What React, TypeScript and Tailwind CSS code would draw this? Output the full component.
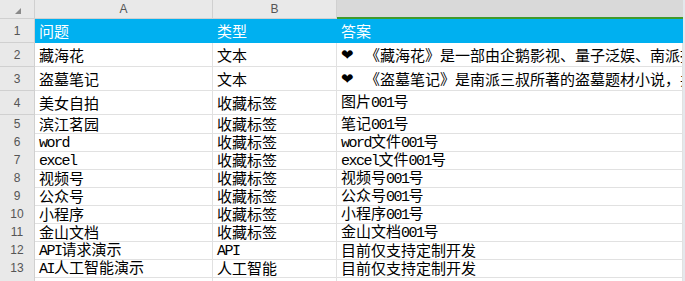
const cols = 'grid grid-cols-[35px_178px_124px_346px_2px]'
const cjk = "font-['Noto_Sans_CJK_SC',sans-serif]"

interface Row {
  q: string
  t: string
  a: string
  heart?: boolean
  tall?: boolean
}

const rows: Row[] = [
  { q: '藏海花', t: '文本', a: '《藏海花》是一部由企鹅影视、量子泛娱、南派投资联合出品的网络剧', heart: true, tall: true },
  { q: '盗墓笔记', t: '文本', a: '《盗墓笔记》是南派三叔所著的盗墓题材小说，共九部', heart: true, tall: true },
  { q: '美女自拍', t: '收藏标签', a: '图片001号', tall: true },
  { q: '滨江茗园', t: '收藏标签', a: '笔记001号' },
  { q: 'word', t: '收藏标签', a: 'word文件001号' },
  { q: 'excel', t: '收藏标签', a: 'excel文件001号' },
  { q: '视频号', t: '收藏标签', a: '视频号001号' },
  { q: '公众号', t: '收藏标签', a: '公众号001号' },
  { q: '小程序', t: '收藏标签', a: '小程序001号' },
  { q: '金山文档', t: '收藏标签', a: '金山文档001号' },
  { q: 'API请求演示', t: 'API', a: '目前仅支持定制开发' },
  { q: 'AI人工智能演示', t: '人工智能', a: '目前仅支持定制开发' },
]

// latin runs get a narrow mono face so they sit at half the width of a CJK glyph
function Mixed({ text }: { text: string }) {
  const parts = text.split(/([\x21-\x7e]+)/).filter(Boolean)
  return (
    <span className="leading-[18px]">
      {parts.map((p, i) =>
        /^[\x21-\x7e]+$/.test(p) ? (
          <span key={i} className="font-['Liberation_Mono',monospace] text-[15px] tracking-[-1.5px]">
            {p}
          </span>
        ) : (
          <span key={i}>{p}</span>
        ),
      )}
    </span>
  )
}

function RowNum({ n }: { n: number | string }) {
  return (
    <div className="flex items-center justify-center border-r border-b border-[#d0d0d0] bg-[#e9e9e9] font-['Liberation_Sans',sans-serif] text-[12px] text-[#555]">
      {n}
    </div>
  )
}

function Cell({ children }: { children?: React.ReactNode }) {
  return (
    <div className="flex items-center overflow-hidden whitespace-nowrap border-r border-b border-[#e1e1e1] pl-[4px] text-[15px] text-black">
      {children}
    </div>
  )
}

export default function App() {
  return (
    <div className={`h-[281px] w-[685px] overflow-hidden bg-white ${cjk}`}>
      <div className={`${cols} h-[19px]`}>
        <div className="relative border-r border-b border-[#d0d0d0] bg-[#e9e9e9]">
          <svg className="absolute top-[8px] left-[15px]" width="6" height="6" viewBox="0 0 6 6">
            <path d="M6 0 V6 H0 Z" fill="#8a8a8a" />
          </svg>
        </div>
        <div className="flex items-center justify-center border-r border-b border-[#d0d0d0] bg-[#e9e9e9] font-['Liberation_Sans',sans-serif] text-[12px] text-[#555]">
          A
        </div>
        <div className="flex items-center justify-center border-r border-b border-[#d0d0d0] bg-[#e9e9e9] font-['Liberation_Sans',sans-serif] text-[12px] text-[#555]">
          B
        </div>
        <div className="border-b-2 border-[#3f9a2c] bg-[#d9d9d9]" />
        <div className="bg-[#e4e8ec]" />
      </div>

      <div className={`${cols} h-[24px]`}>
        <RowNum n={1} />
        <div className="flex items-center bg-[#00b0f0] pl-[4px] text-[15px] text-white">问题</div>
        <div className="flex items-center bg-[#00b0f0] pl-[4px] text-[15px] text-white">类型</div>
        <div className="flex items-center bg-[#00b0f0] pl-[4px] text-[15px] text-white">答案</div>
        <div className="bg-[#e4e8ec]" />
      </div>

      {rows.map((r, i) => (
        <div key={i} className={`${cols} ${r.tall ? 'h-[24px]' : 'h-[18px]'}`}>
          <RowNum n={i + 2} />
          <Cell>
            <Mixed text={r.q} />
          </Cell>
          <Cell>
            <Mixed text={r.t} />
          </Cell>
          <Cell>
            {r.heart && (
              <span className="inline-block w-[24px] shrink-0 font-['DejaVu_Sans',sans-serif] text-[15px] leading-[18px]">❤</span>
            )}
            <Mixed text={r.a} />
          </Cell>
          <div className="bg-[#e4e8ec]" />
        </div>
      ))}

      <div className={`${cols} h-[18px]`}>
        <RowNum n={14} />
        <Cell />
        <Cell />
        <Cell />
        <div className="bg-[#e4e8ec]" />
      </div>
    </div>
  )
}
